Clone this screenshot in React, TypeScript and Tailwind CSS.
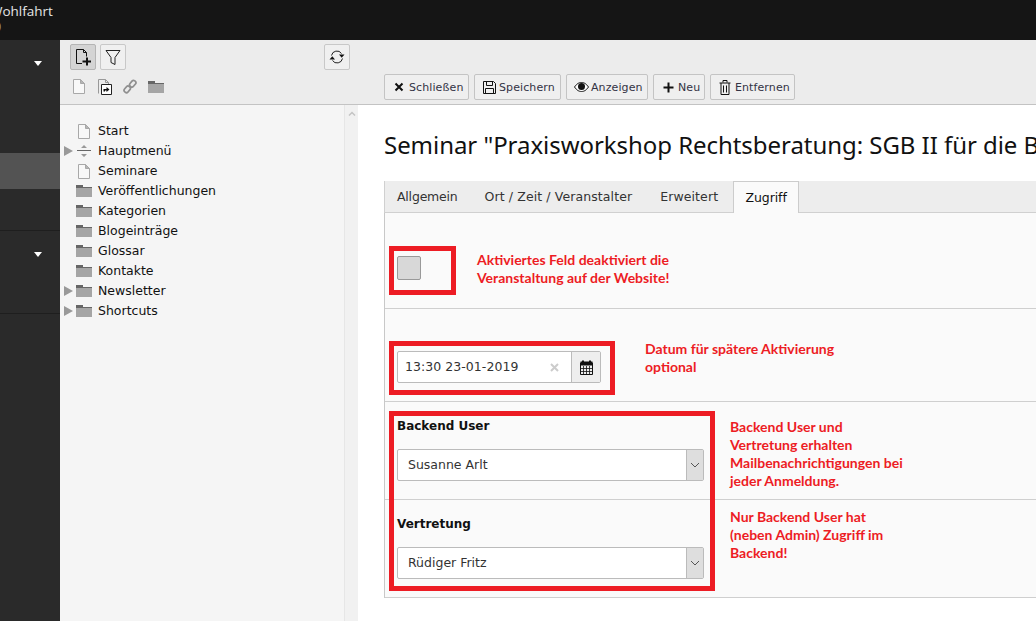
import React from "react";

const ui = "font-['DejaVu_Sans',sans-serif]";

function Page({ className = "" }: { className?: string }) {
  return (
    <svg width="14" height="17" viewBox="0 0 14 17" className={className} fill="none">
      <path d="M1.5 1.5h7l4 4v10h-11z" fill="#f8f8f8" stroke="#a8a8a8" />
      <path d="M8.5 1.5v4h4z" fill="#b5b5b5" stroke="#a8a8a8" />
    </svg>
  );
}
function Folder() {
  return (
    <svg width="16" height="12" viewBox="0 0 16 12">
      <path d="M0 0h7v2h9v10H0z" fill="#a5a5a5" />
      <path d="M0 0h7v3H0z" fill="#666" />
      <path d="M7 2h9v1H7z" fill="#666" />
    </svg>
  );
}
function Separator() {
  return (
    <svg width="14" height="12" viewBox="0 0 14 12">
      <path d="M0 5.5h14" stroke="#666" />
      <path d="M7 0l3 3H4zM7 12l3-3H4z" fill="#999" />
    </svg>
  );
}
function Caret() {
  return (
    <svg width="8" height="5" viewBox="0 0 8 5">
      <path d="M0 0h8L4 5z" fill="#fff" />
    </svg>
  );
}
function Chevron() {
  return (
    <svg width="10" height="6" viewBox="0 0 10 6" fill="none">
      <path d="M1 1l4 4 4-4" stroke="#555" />
    </svg>
  );
}
function TreeRow({ label, arrow, icon }: { label: string; arrow?: boolean; icon: React.ReactNode }) {
  return (
    <div className="flex h-5 items-center">
      <div className="flex w-[13px] justify-end">
        {arrow && (
          <svg width="9" height="10" viewBox="0 0 9 10">
            <path d="M0 0l9 5-9 5z" fill="#999" />
          </svg>
        )}
      </div>
      <div className="ml-px flex w-5 justify-center">{icon}</div>
      <span className="ml-1 text-[12.5px] text-[#111]">{label}</span>
    </div>
  );
}
function ToolButton({ children, active }: { children: React.ReactNode; active?: boolean }) {
  return (
    <div
      className={`flex h-[26px] w-[26px] items-center justify-center rounded-[2px] border ${
        active ? "border-[#b5b5b5] bg-[#d4d4d4]" : "border-[#c8c8c8] bg-[#f0f0f0]"
      }`}
    >
      {children}
    </div>
  );
}
function DocButton({ w, icon, label }: { w: string; icon: React.ReactNode; label: string }) {
  return (
    <div className={`flex h-[26px] items-center rounded-[2px] border border-[#c4c4c4] bg-[#efefef] pl-[5px] ${w}`}>
      <div className="flex w-[18px] justify-center">{icon}</div>
      <span className="ml-px pt-[2px] text-[11px] tracking-[0.1px] text-[#333344]">{label}</span>
    </div>
  );
}
function SelectBox({ value }: { value: string }) {
  return (
    <div className="flex h-8 w-[307px] rounded-[2px] border border-[#bbb] bg-white">
      <div className="flex flex-1 items-center pl-[10px] text-[12.5px] text-[#333]">{value}</div>
      <div className="flex w-[17px] items-center justify-center border-l border-[#bbb] bg-[#dedede]">
        <Chevron />
      </div>
    </div>
  );
}
function Note({ className, children }: { className: string; children: React.ReactNode }) {
  return (
    <div className={`absolute font-['Lato',sans-serif] text-[14px] leading-[18px] font-bold whitespace-nowrap text-[#ed1c24] ${className}`}>
      {children}
    </div>
  );
}
function RedBox({ className }: { className: string }) {
  return <div className={`absolute border-[5px] border-[#ed1c24] ${className}`} />;
}

export default function App() {
  const tree: { label: string; arrow?: boolean; icon: React.ReactNode }[] = [
    { label: "Start", icon: <Page /> },
    { label: "Hauptmenü", arrow: true, icon: <Separator /> },
    { label: "Seminare", icon: <Page /> },
    { label: "Veröffentlichungen", icon: <Folder /> },
    { label: "Kategorien", icon: <Folder /> },
    { label: "Blogeinträge", icon: <Folder /> },
    { label: "Glossar", icon: <Folder /> },
    { label: "Kontakte", icon: <Folder /> },
    { label: "Newsletter", arrow: true, icon: <Folder /> },
    { label: "Shortcuts", arrow: true, icon: <Folder /> },
  ];
  return (
    <div className={`relative flex h-[621px] w-[1036px] flex-col overflow-hidden bg-white ${ui}`}>
      <header className="h-10 shrink-0 overflow-hidden bg-[#151515] font-['Open_Sans',sans-serif] text-white">
        <div className="-ml-[10px] pt-[3px] text-[13.5px] leading-[17px] text-[#e6e6e6]">Wohlfahrt</div>
        <div className="-ml-[2px] text-[10px] leading-[12px] text-[#aaa]">)</div>
      </header>
      <div className="flex min-h-0 flex-1">
        <nav className="w-[60px] shrink-0 bg-[#2a2a2a]">
          <div className="flex h-[26px] items-end justify-end pr-[18px]">
            <Caret />
          </div>
          <div className="h-[87px]" />
          <div className="h-9 bg-[#535353]" />
          <div className="h-[42px] border-b border-[#1e1e1e]" />
          <div className="flex h-[26px] items-end justify-end pr-[18px]">
            <Caret />
          </div>
          <div className="h-[57px] border-b border-[#1e1e1e]" />
        </nav>
        <aside className="flex w-[298px] shrink-0 flex-col">
          <div className="h-[65px] border-b border-[#c3c3c3] bg-[#ececec] pt-1 pl-[10px]">
            <div className="flex items-center pr-2">
              <div className="flex gap-1">
                <ToolButton active>
                  <svg width="18" height="18" viewBox="0 0 18 18" fill="none">
                    <path d="M8 15.500H2.500v-14h7l3 3v4" stroke="#111" />
                    <path d="M9.500 1.500v3h3" stroke="#111" />
                    <path d="M8.500 13.500h8.500M13 9.500v8" stroke="#111" strokeWidth="2" />
                  </svg>
                </ToolButton>
                <ToolButton>
                  <svg width="16" height="17" viewBox="0 0 16 17" fill="none">
                    <path d="M1 1.500h14l-5 7v7l-4-2v-5z" stroke="#222" />
                  </svg>
                </ToolButton>
              </div>
              <div className="ml-[198px]">
                <ToolButton>
                  <svg width="16" height="16" viewBox="0 0 16 16" fill="none">
                    <path d="M2.500 6.500A5.500 5.500 0 0 1 12.500 4.500M13.500 9.500A5.500 5.500 0 0 1 3.500 11.500" stroke="#222" />
                    <path d="M10 5.500h5.500l-2.800 3.200zM6 10.500H0.500l2.800-3.200z" fill="#111" />
                  </svg>
                </ToolButton>
              </div>
            </div>
            <div className="mt-[8px] flex items-center pl-[2px]">
              <div className="flex w-[25px]">
                <Page />
              </div>
              <div className="flex w-[26px]">
                <svg width="15" height="17" viewBox="0 0 15 17" fill="none">
                  <path d="M1.500 15.500v-14h7l3 3v2" stroke="#999" />
                  <path d="M8.500 1.500v3h3" stroke="#999" />
                  <path d="M4.500 6.500h10v10h-10z" fill="#fff" stroke="#222" />
                  <path d="M6.500 13.500v-2.500h3V9l3 2.500-3 2.500v-1.500h-1.500v1z" fill="#111" />
                </svg>
              </div>
              <div className="flex w-[25px]">
                <svg width="14" height="15" viewBox="0 0 14 15" fill="none" stroke="#8f8f8f" strokeWidth="1.700">
                  <rect x="7.500" y="1.200" width="4.500" height="7" rx="2" transform="rotate(40 9.700 4.700)" />
                  <rect x="2" y="6.800" width="4.500" height="7" rx="2" transform="rotate(40 4.200 10.300)" />
                </svg>
              </div>
              <Folder />
            </div>
          </div>
          <div className="flex flex-1">
            <div className="w-[284px] bg-[#f5f5f5] pt-4">
              {tree.map((t) => (
                <TreeRow key={t.label} {...t} />
              ))}
            </div>
            <div className="flex w-[14px] justify-center border-l border-[#e6e6e6] bg-[#f1f1f1] pt-[6px]">
              <svg width="8" height="5" viewBox="0 0 8 5" fill="none">
                <path d="M1 4.500l3-3 3 3" stroke="#c4c4c4" strokeWidth="1.500" />
              </svg>
            </div>
          </div>
        </aside>
        <main className="flex min-w-0 flex-1 flex-col">
          <div className="flex h-[65px] items-start gap-[5px] border-b border-[#c3c3c3] bg-[#ececec] pt-[34px] pl-[26px]">
            <DocButton
              w="w-[85px]"
              label="Schließen"
              icon={
                <svg width="10" height="10" viewBox="0 0 10 10">
                  <path d="M1.500 1.500l7 7M8.500 1.500l-7 7" stroke="#111" strokeWidth="2" />
                </svg>
              }
            />
            <DocButton
              w="w-[87px]"
              label="Speichern"
              icon={
                <svg width="15" height="15" viewBox="0 0 15 15" fill="none" stroke="#111">
                  <path d="M1.500 1.500h10l2 2v10h-12z" />
                  <path d="M4.500 1.500v4h6v-4M3.500 13.500v-5h8v5" />
                </svg>
              }
            />
            <DocButton
              w="w-[82px]"
              label="Anzeigen"
              icon={
                <svg width="15" height="10" viewBox="0 0 15 10">
                  <path d="M0.500 5C3 1.500 5 0.500 7.500 0.500S12 1.500 14.500 5C12 8.500 10 9.500 7.500 9.500S3 8.500 0.500 5z" fill="#fff" stroke="#111" />
                  <circle cx="7.500" cy="4.500" r="3.500" fill="#111" />
                </svg>
              }
            />
            <DocButton
              w="w-[52px]"
              label="Neu"
              icon={
                <svg width="11" height="11" viewBox="0 0 11 11">
                  <path d="M5.500 0.500v10M0.500 5.500h10" stroke="#111" strokeWidth="2" />
                </svg>
              }
            />
            <DocButton
              w="w-[85px]"
              label="Entfernen"
              icon={
                <svg width="12" height="15" viewBox="0 0 12 15" fill="none" stroke="#111">
                  <path d="M0.500 3h11M4 2.500v-2h4v2M2 3v11.500h8V3M4.500 5.500v7M7.500 5.500v7" />
                </svg>
              }
            />
          </div>
          <div className="pl-[26px]">
            <div className="flex h-[76px] items-start overflow-hidden pt-[23px]">
              <h1 className="font-['Noto_Sans',sans-serif] text-[24px] leading-[34px] tracking-[-0.05px] whitespace-nowrap text-[#111]">
                Seminar "Praxisworkshop Rechtsberatung: SGB II für die B
              </h1>
            </div>
            <div className="flex h-8 items-stretch border-b border-l border-[#d0d0d0] bg-[#ededed] text-[12.5px] text-[#333]">
              <div className="flex items-center pt-px pl-3 tracking-[-0.2px]">Allgemein</div>
              <div className="ml-[27px] flex items-center pt-px tracking-[0.1px]">Ort / Zeit / Veranstalter</div>
              <div className="ml-[28px] flex items-center pt-px tracking-[0.1px]">Erweitert</div>
              <div className="ml-[15px] -mb-px flex w-[66px] items-center justify-center border-x border-t border-[#ccc] bg-[#fafafa] pt-px tracking-[-0.1px] text-[#111]">
                Zugriff
              </div>
            </div>
            <div className="border-l border-[#c8c8c8] bg-[#fafafa]">
              <div className="h-24 border-b border-[#cfcfcf] pt-[43px] pl-3">
                <div className="h-6 w-6 rounded-[2px] border border-[#999] bg-[#d8d8d8]" />
              </div>
              <div className="h-[93px] border-b border-[#cfcfcf] pt-[42px] pl-3">
                <div className="flex h-8 w-[204px] rounded-[2px] border border-[#bbb] bg-white">
                  <div className="flex flex-1 items-center justify-between pr-3 pl-[7px] text-[12.5px] tracking-[0.05px] text-[#333]">
                    <span>13:30 23-01-2019</span>
                    <svg width="9" height="9" viewBox="0 0 9 9">
                      <path d="M1 1l7 7M8 1L1 8" stroke="#ccc" strokeWidth="2" />
                    </svg>
                  </div>
                  <div className="flex w-[29px] items-center justify-center border-l border-[#bbb] bg-[#eee]">
                    <svg width="13" height="15" viewBox="0 0 13 15" fill="none">
                      <path d="M0.500 3h12v11.500H0.500z" stroke="#111" />
                      <path d="M0.500 1.500h12v4H0.500z" fill="#111" />
                      <path d="M3 0.500v3M10 0.500v3" stroke="#111" strokeWidth="2" />
                      <path d="M3.500 6v8M6.500 6v8M9.500 6v8M1 8.500h11M1 11.500h11" stroke="#111" strokeWidth="0.800" />
                    </svg>
                  </div>
                </div>
              </div>
              <div className="h-[98px] border-b border-[#cfcfcf] pt-[14px] pl-3">
                <div className="h-5 text-[12px] leading-5 font-bold text-[#111]">Backend User</div>
                <div className="mt-[13px]">
                  <SelectBox value="Susanne Arlt" />
                </div>
              </div>
              <div className="h-[98px] border-b border-[#cfcfcf] pt-[14px] pl-3">
                <div className="h-5 text-[12px] leading-5 font-bold text-[#111]">Vertretung</div>
                <div className="mt-[13px]">
                  <SelectBox value="Rüdiger Fritz" />
                </div>
              </div>
            </div>
          </div>
        </main>
      </div>

      <RedBox className="top-[246px] left-[389px] h-[49px] w-[67px]" />
      <RedBox className="top-[341px] left-[389px] h-[54px] w-[226px]" />
      <RedBox className="top-[411px] left-[389px] h-[180px] w-[326px]" />
      <Note className="top-[251px] left-[477px]">
        Aktiviertes Feld deaktiviert die
        <br />
        Veranstaltung auf der Website!
      </Note>
      <Note className="top-[340px] left-[645px]">
        Datum für spätere Aktivierung
        <br />
        optional
      </Note>
      <Note className="top-[418px] left-[730px]">
        Backend User und
        <br />
        Vertretung erhalten
        <br />
        Mailbenachrichtigungen bei
        <br />
        jeder Anmeldung.
      </Note>
      <Note className="top-[508px] left-[730px]">
        Nur Backend User hat
        <br />
        (neben Admin) Zugriff im
        <br />
        Backend!
      </Note>
    </div>
  );
}
